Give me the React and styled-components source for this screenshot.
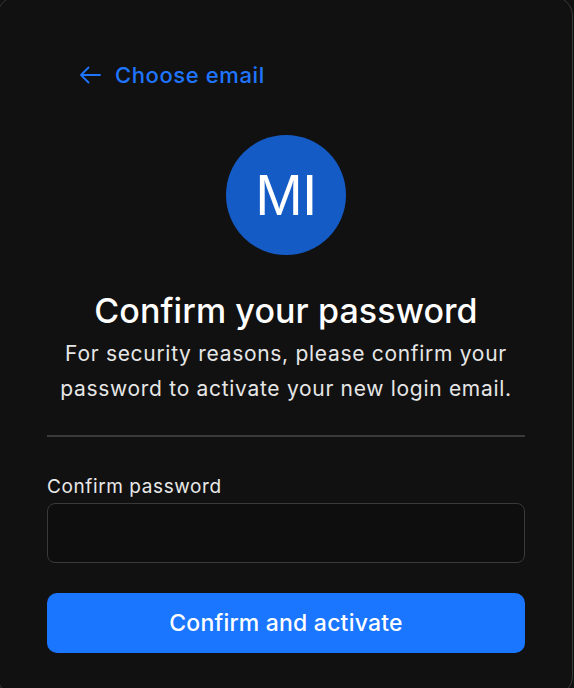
import React from 'react';
import styled, { createGlobalStyle } from 'styled-components';

const GlobalStyle = createGlobalStyle`
  html, body {
    margin: 0;
    padding: 0;
    background: #111111;
    overflow: hidden;
  }
  body {
    font-family: Inter, "Noto Sans", sans-serif;
    -webkit-font-smoothing: antialiased;
  }
`;

const Page = styled.div`
  width: 574px;
  height: 688px;
  overflow: hidden;
`;

const Card = styled.div`
  box-sizing: border-box;
  width: 576px;
  height: 700px;
  margin: -4px 0 0 -3px;
  padding: 63px 47px 0 49px;
  background: #111111;
  border: 1px solid #3a3a3a;
  border-radius: 20px;
  display: flex;
  flex-direction: column;
`;

const BackLink = styled.a`
  display: flex;
  align-items: center;
  gap: 14px;
  margin-left: 32px;
  color: #1f75fe;
  font-size: 22px;
  font-weight: 500;
  letter-spacing: 0.6px;
  line-height: 30px;
  text-decoration: none;
  cursor: pointer;
`;

const Header = styled.div`
  display: flex;
  flex-direction: column;
  align-items: center;
  text-align: center;
`;

const Avatar = styled.div`
  width: 120px;
  height: 120px;
  margin-top: 45px;
  border-radius: 50%;
  background: #155bc6;
  color: #ffffff;
  display: flex;
  align-items: center;
  justify-content: center;
  font-family: "Liberation Sans", Arial, sans-serif;
  font-size: 57px;
  letter-spacing: -1px;
`;

const Title = styled.h1`
  margin: 36px 0 0;
  color: #ffffff;
  font-size: 34px;
  font-weight: 500;
  line-height: 40px;
  letter-spacing: 0.1px;
`;

const Subtitle = styled.p`
  margin: 5px 0 0;
  color: #e6e6e6;
  font-size: 21px;
  line-height: 35px;
  letter-spacing: 0.7px;
`;

const Divider = styled.hr`
  width: 100%;
  margin: 29px 0 0;
  border: none;
  border-top: 2px solid #3a3a3a;
`;

const Field = styled.label`
  display: flex;
  flex-direction: column;
  gap: 4px;
  margin-top: 37px;
`;

const Label = styled.span`
  color: #e8e8e8;
  font-size: 19px;
  line-height: 25px;
  letter-spacing: 0.6px;
`;

const Input = styled.input`
  box-sizing: border-box;
  width: 100%;
  height: 60px;
  padding: 0 16px;
  background: #0e0e0e;
  border: 1px solid #3a3a3a;
  border-radius: 8px;
  color: #ffffff;
  font-size: 18px;
  outline: none;
`;

const PrimaryButton = styled.button`
  width: 100%;
  height: 60px;
  margin-top: 30px;
  border: none;
  border-radius: 10px;
  background: #1a75ff;
  color: #ffffff;
  font-family: inherit;
  font-size: 23px;
  font-weight: 500;
  letter-spacing: 0.2px;
  cursor: pointer;
`;

const ArrowLeft = () => (
  <svg width="22" height="18" viewBox="0 0 22 18" fill="none" stroke="currentColor" strokeWidth="1.8" strokeLinecap="round" strokeLinejoin="round">
    <path d="M21 9H2M9.5 1.5L2 9l7.5 7.5" />
  </svg>
);

export default function App() {
  return (
    <Page>
      <GlobalStyle />
      <Card>
        <BackLink>
          <ArrowLeft />
          Choose email
        </BackLink>
        <Header>
          <Avatar>MI</Avatar>
          <Title>Confirm your password</Title>
          <Subtitle>
            For security reasons, please confirm your
            <br />
            password to activate your new login email.
          </Subtitle>
        </Header>
        <Divider />
        <Field>
          <Label>Confirm password</Label>
          <Input type="password" />
        </Field>
        <PrimaryButton>Confirm and activate</PrimaryButton>
      </Card>
    </Page>
  );
}
